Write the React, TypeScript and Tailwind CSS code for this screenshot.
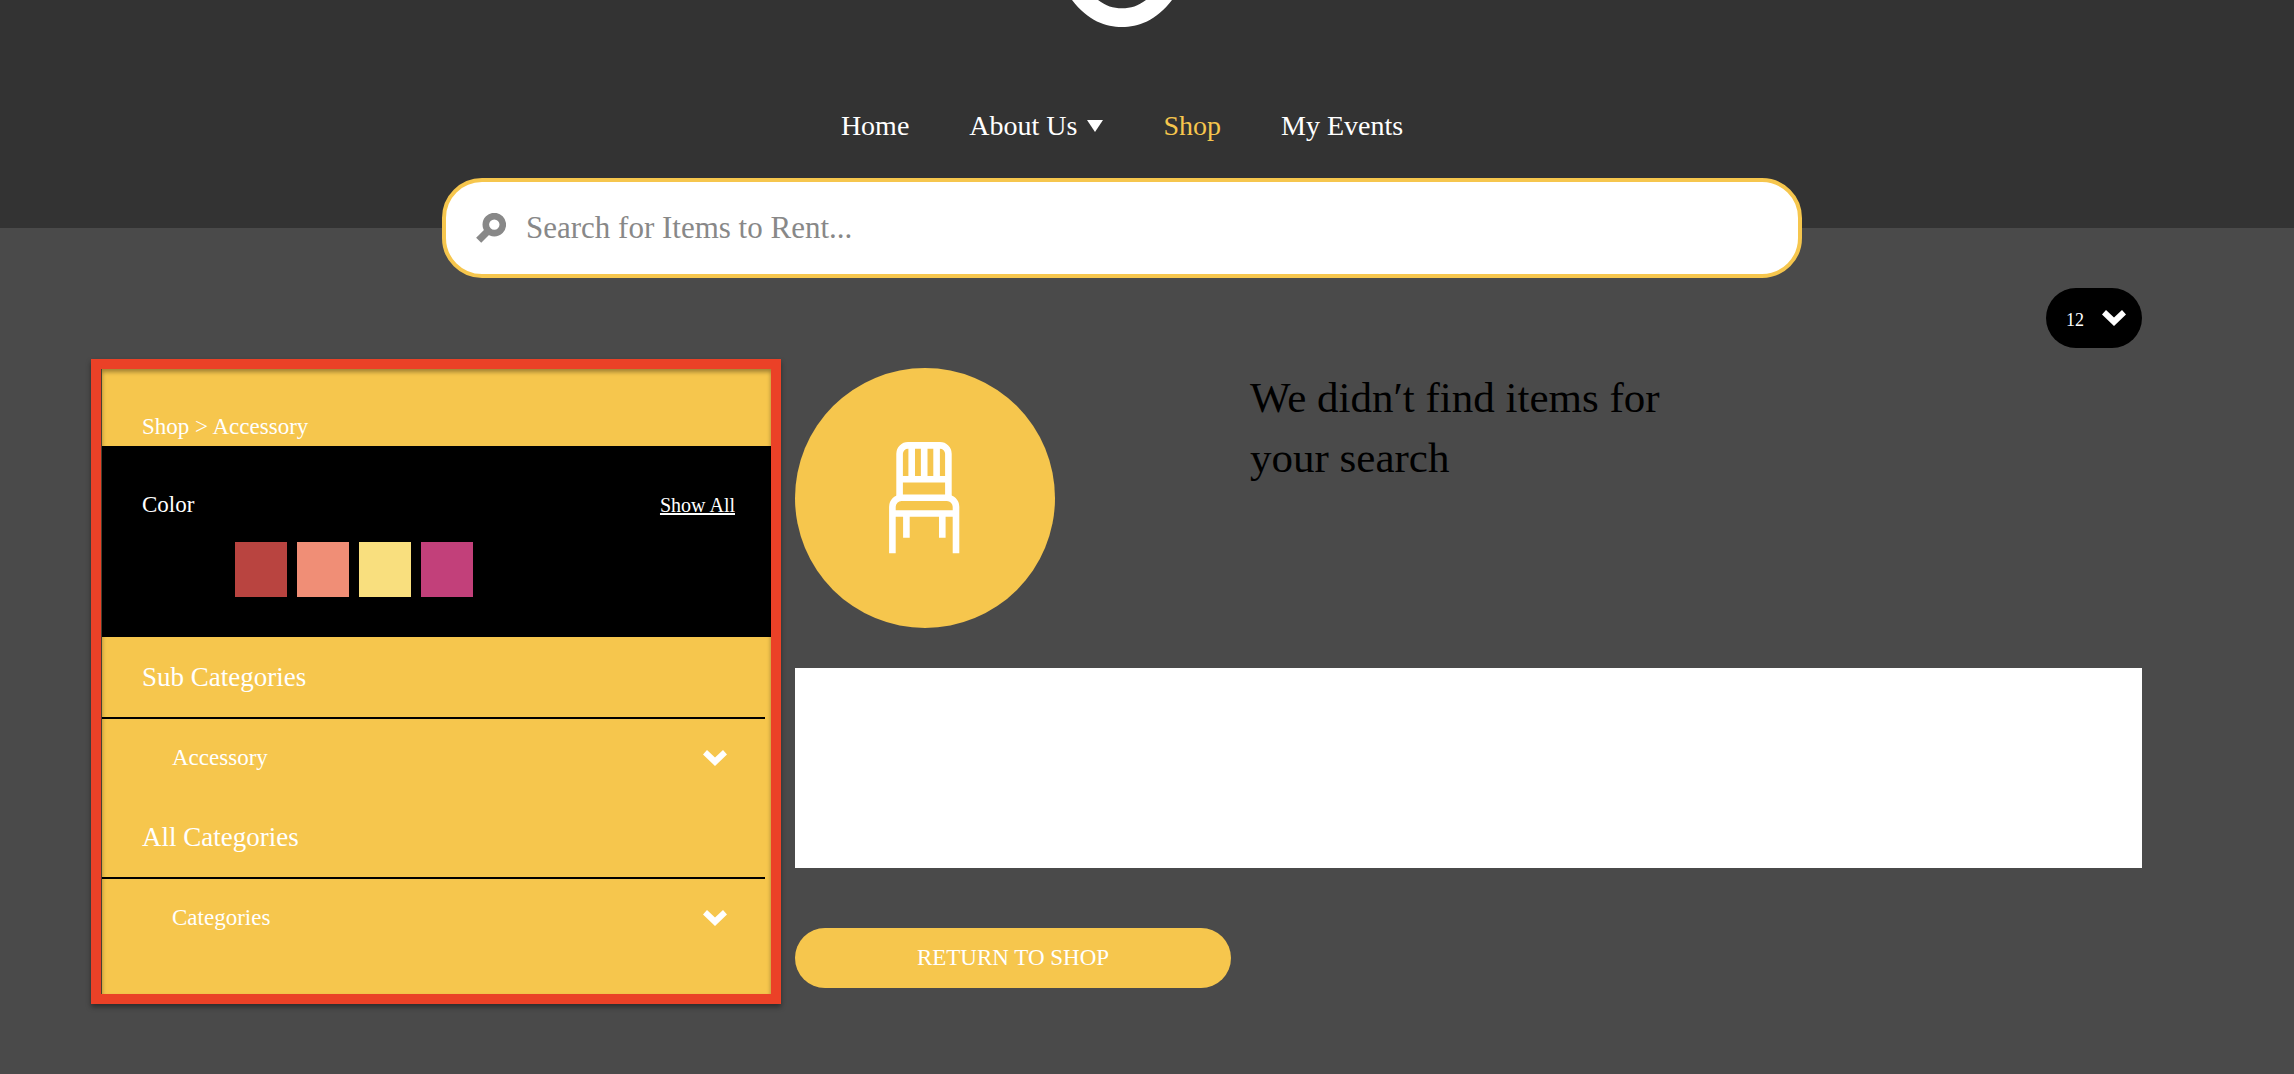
import { clsx } from "clsx";

const NAV_LINKS = [
  { label: "Home", href: "#home" },
  { label: "About Us", href: "#about", hasMenu: true },
  { label: "Shop", href: "#shop", active: true },
  { label: "My Events", href: "#events" },
];

const SWATCHES = [
  { name: "Black", className: "bg-black" },
  { name: "Red", className: "bg-[#b94440]" },
  { name: "Coral", className: "bg-[#f08e76]" },
  { name: "Yellow", className: "bg-[#f9df7e]" },
  { name: "Magenta", className: "bg-[#c2407a]" },
];

const CATEGORY_GROUPS = [
  { title: "Sub Categories", item: "Accessory" },
  { title: "All Categories", item: "Categories" },
];

function Chevron({ className }: { className?: string }) {
  return (
    <svg viewBox="0 0 24 16" className={clsx("h-4 w-6", className)} aria-hidden="true">
      <path d="M0 4.5 4 0l8 7.5L20 0l4 4.5L12 16Z" fill="currentColor" />
    </svg>
  );
}

function SearchIcon() {
  return (
    <svg viewBox="0 0 30 30" className="size-[30px] shrink-0" fill="none" stroke="#888" aria-hidden="true">
      <circle cx="18.3" cy="11.6" r="8.5" strokeWidth="6.6" />
      <path d="m13.5 16.5-10.8 10.8" strokeWidth="7.2" />
    </svg>
  );
}

function ChairIcon() {
  return (
    <svg
      viewBox="0 0 72 112"
      className="h-28 w-[72px]"
      fill="none"
      stroke="currentColor"
      strokeWidth="6.6"
      aria-hidden="true"
    >
      <path d="M10.6 55V11.8a8.4 8.4 0 0 1 8.4-8.4h32a8.4 8.4 0 0 1 8.4 8.4V55" />
      <path d="M10.6 37.2h48.8M22.7 3.4v34M35.2 3.4v34M47.6 3.4v34" />
      <path d="M3.4 111.2V64.8a9.1 9.1 0 0 1 9.1-9.1h45.4a9.1 9.1 0 0 1 9.1 9.1v46.4" />
      <path d="M3.4 71.5H67M17.4 71.5v24.3M53.3 71.5v24.3" />
    </svg>
  );
}

function Header() {
  return (
    <header className="bg-[#333]">
      <div className="mx-auto flex max-w-[2040px] flex-col items-center">
        <svg viewBox="0 0 100 27" className="h-[27px] w-[100px]" role="img" aria-label="Logo">
          <path d="M0 0C16 21 34 27 50 27S84 21 100 0H74C66 6 59 8.3 50 8.3S34 6 26 0Z" fill="#fff" />
        </svg>

        <nav className="mt-[79px] flex gap-[60px] text-[28px] leading-10 text-white">
          {NAV_LINKS.map((link) => (
            <a
              key={link.label}
              href={link.href}
              className={clsx("flex items-center gap-2.5", link.active && "text-[#f6c64d]")}
            >
              {link.label}
              {link.hasMenu && (
                <svg viewBox="0 0 16 12" className="h-3 w-4" aria-hidden="true">
                  <path d="M0 0h16L8 12Z" fill="currentColor" />
                </svg>
              )}
            </a>
          ))}
        </nav>

        {/* Search bar straddles the header edge */}
        <form
          role="search"
          className="relative mt-8 -mb-[50px] flex h-[100px] w-2/3 items-center gap-5 rounded-[40px] border-4 border-[#f6c64d] bg-white px-[30px]"
        >
          <SearchIcon />
          <input
            type="text"
            aria-label="Search for items to rent"
            placeholder="Search for Items to Rent..."
            className="h-full min-w-0 flex-1 bg-transparent text-[31px] text-[#333] outline-none placeholder:text-[#888]"
          />
        </form>
      </div>
    </header>
  );
}

function Filters() {
  return (
    <aside className="w-[690px] shrink-0 border-[10px] border-[#eb4127] shadow-[0_3px_5px_rgba(0,0,0,0.4)]">
      <div className="h-full border-l border-[#4a4030] bg-[#f6c64d] pb-[37px] text-white shadow-[inset_0_3px_4px_rgba(0,0,0,0.35)]">
        <nav aria-label="Breadcrumb" className="pt-[43px] pb-1 pl-10 text-[23px] leading-[30px]">
          <a href="#shop">Shop</a> &gt; <a href="#accessory">Accessory</a>
        </nav>

        <section className="bg-black pt-11 pr-9 pb-10 pl-10">
          <div className="flex items-baseline justify-between leading-[30px]">
            <h2 className="text-[23px]">Color</h2>
            <button type="button" className="text-xl leading-[30px] underline decoration-2">
              Show All
            </button>
          </div>
          <div className="mt-[22px] ml-[31px] flex gap-2.5">
            {SWATCHES.map((swatch) => (
              <button
                key={swatch.name}
                type="button"
                aria-label={swatch.name}
                className={clsx("h-[55px] w-[52px]", swatch.className)}
              />
            ))}
          </div>
        </section>

        {CATEGORY_GROUPS.map((group) => (
          <section key={group.title}>
            <h2 className="mr-1.5 border-b-2 border-black py-5 pl-10 text-[27px] leading-10">
              {group.title}
            </h2>
            <button
              type="button"
              className="flex h-[78px] w-full items-center justify-between pr-11 pl-[70px] text-[23px]"
            >
              {group.item}
              <Chevron />
            </button>
          </section>
        ))}
      </div>
    </aside>
  );
}

function EmptyResults() {
  return (
    <section className="min-w-0 flex-1 pt-[9px]">
      <div className="grid grid-cols-3">
        <div className="flex size-[260px] items-center justify-center rounded-full bg-[#f6c64d] text-white">
          <ChairIcon />
        </div>
        <h1 className="pl-1.5 text-[43px] leading-[60px] text-black">
          We didn&#8242;t find items for your search
        </h1>
      </div>
      <div className="mt-10 h-[200px] bg-white" />
      <button
        type="button"
        className="mt-[60px] h-[60px] w-[436px] rounded-full bg-[#f6c64d] text-[23px] text-white uppercase"
      >
        Return to Shop
      </button>
    </section>
  );
}

export default function App() {
  return (
    <div className="min-h-screen bg-[#4a4a4a] font-['Liberation_Serif',serif]">
      <div className="bg-[#333] pr-[50px]">
        <Header />
      </div>
      <main className="pt-[60px] pr-[152px] pb-[70px] pl-[91px]">
        <div className="flex justify-end">
          <div className="relative">
            <select
              aria-label="Items per page"
              className="h-[60px] w-24 appearance-none rounded-[30px] bg-black pt-1 pl-5 text-lg text-white"
            >
              <option>12</option>
              <option>24</option>
              <option>48</option>
            </select>
            <Chevron className="pointer-events-none absolute top-[22px] right-4 text-white" />
          </div>
        </div>
        <div className="mt-[11px] flex items-start gap-3.5">
          <Filters />
          <EmptyResults />
        </div>
      </main>
    </div>
  );
}
